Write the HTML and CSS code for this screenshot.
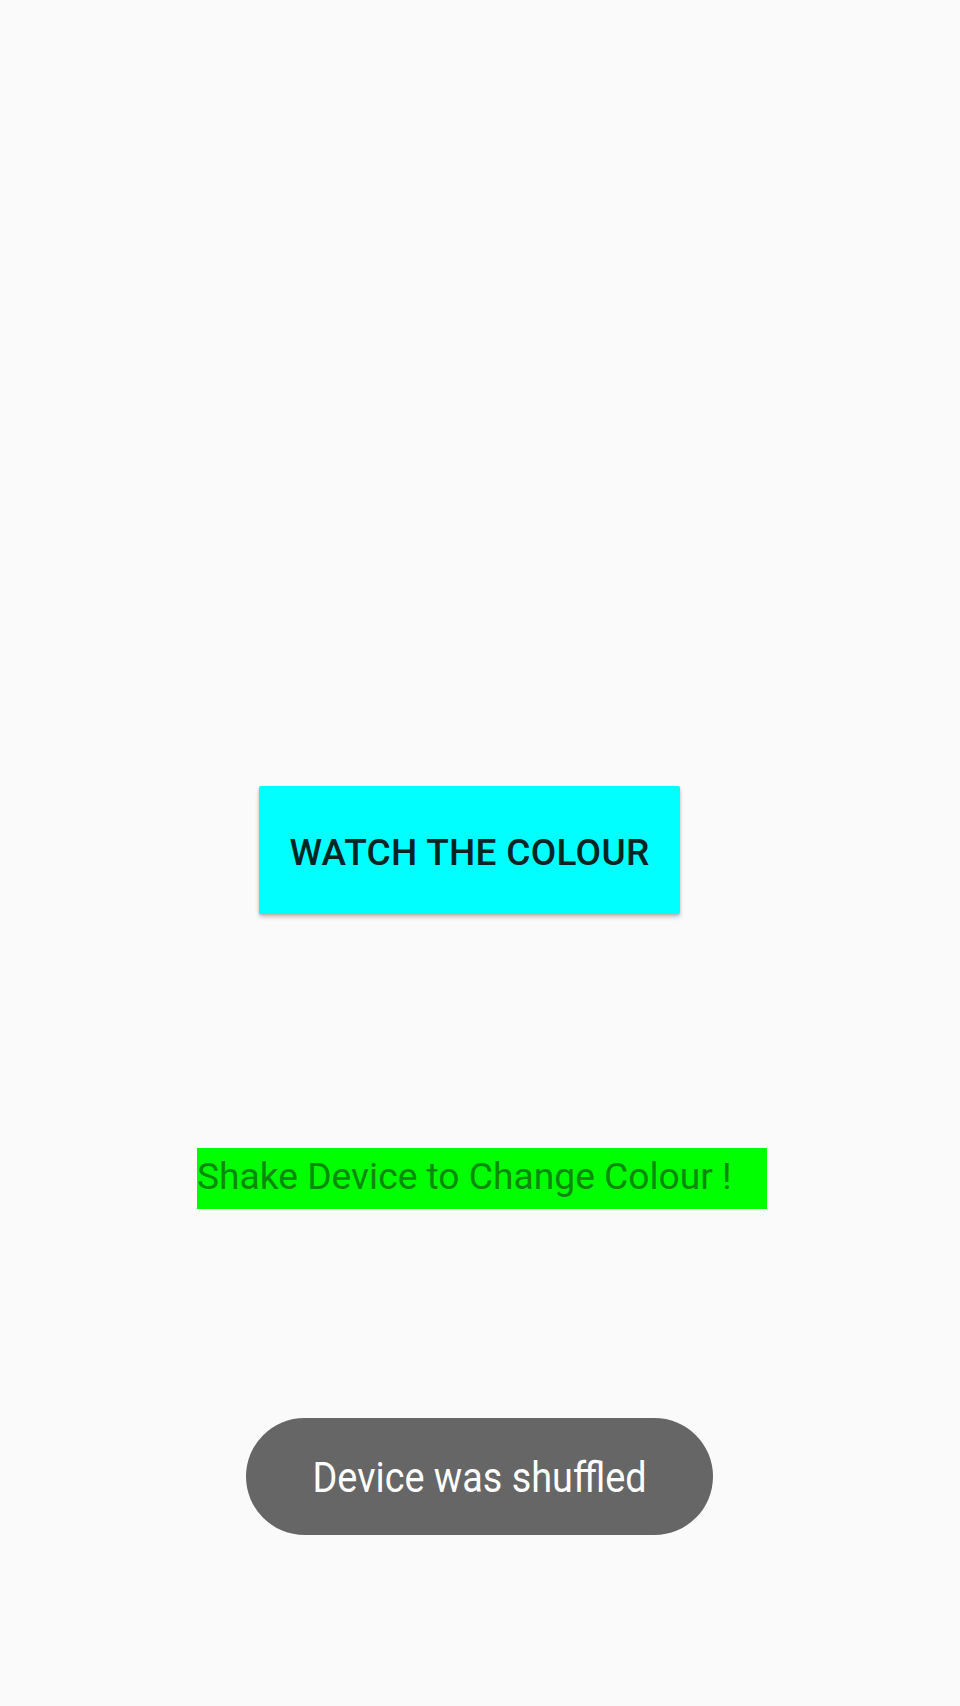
FILE: index.html
```html
<!DOCTYPE html>
<html>
<head>
<meta charset="utf-8">
<link rel="stylesheet" href="styles.css">
</head>
<body>
<main class="screen">
  <button class="watch-btn">WATCH THE COLOUR</button>
  <div class="shake-label">Shake Device to Change Colour !</div>
  <div class="toast"><span class="toast-text">Device was shuffled</span></div>
</main>
</body>
</html>
```
FILE: styles.css
```css
html, body {
  margin: 0;
  padding: 0;
  background: #fafafa;
}
.screen {
  width: 960px;
  height: 1706px;
  display: flex;
  flex-direction: column;
  align-items: flex-start;
  padding-top: 786px;
  box-sizing: border-box;
  font-family: Roboto, "Liberation Sans", sans-serif;
}
.watch-btn {
  margin-left: 259px;
  width: 421px;
  height: 128px;
  border: none;
  border-radius: 2px;
  background: #00ffff;
  color: #052525;
  font-family: Roboto, "Liberation Sans", sans-serif;
  font-weight: 500;
  font-size: 37px;
  letter-spacing: 0.3px;
  padding: 4px 0 0 0;
  box-shadow: 0 3px 4px rgba(0,0,0,0.22), 0 1px 2px rgba(0,0,0,0.12);
}
.shake-label {
  margin-top: 234px;
  margin-left: 197px;
  width: 570px;
  height: 61px;
  background: #00ff00;
  color: #0a8a0a;
  font-size: 37.2px;
  line-height: 56px;
  padding-left: 0;
  box-sizing: border-box;
}
.toast {
  margin-top: 209px;
  margin-left: 246px;
  width: 467px;
  height: 117px;
  border-radius: 59px;
  background: #666666;
  display: flex;
  align-items: center;
  justify-content: center;
}
.toast-text {
  display: inline-block;
  color: #ffffff;
  font-size: 42px;
  transform: scaleX(0.9);
  margin-top: 2px;
}
```
